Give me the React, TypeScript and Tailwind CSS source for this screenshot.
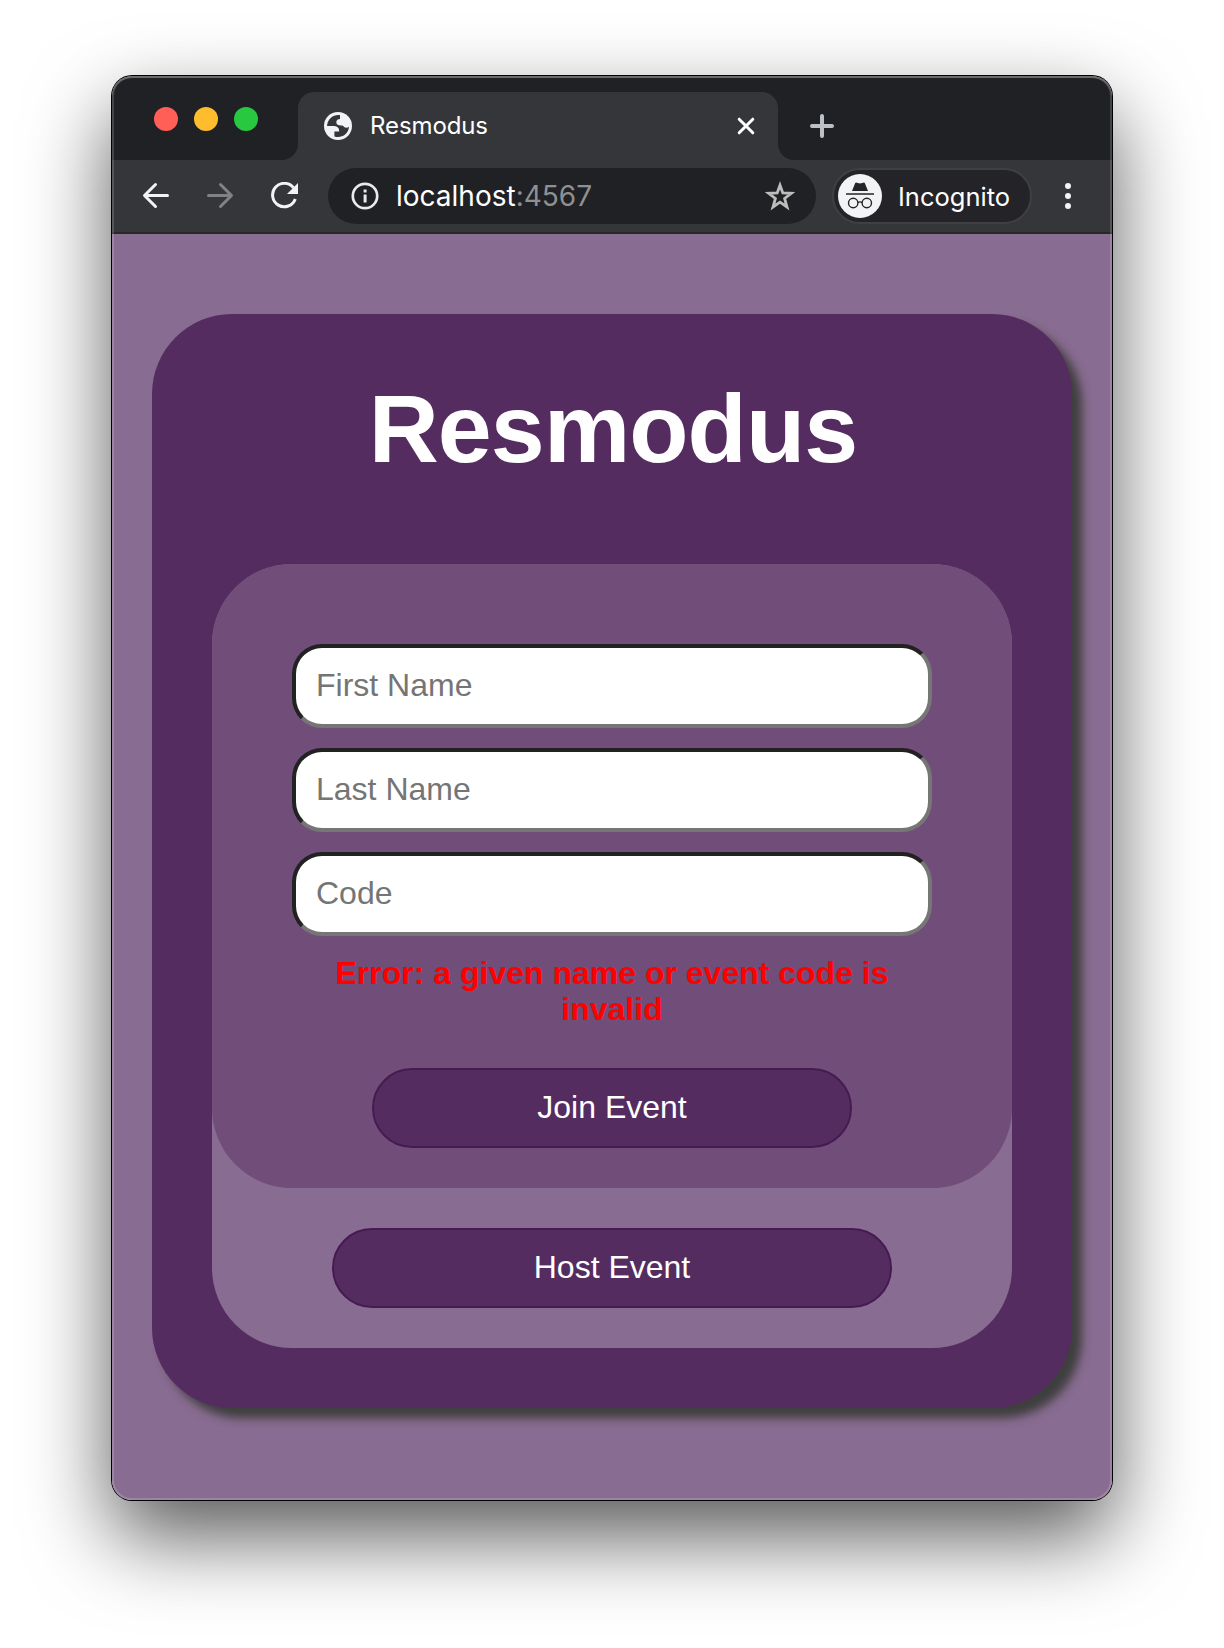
import React from "react";

const FIELDS = ["First Name", "Last Name", "Code"];

function TrafficLights() {
  return (
    <div className="flex gap-4 pl-[42px] pt-[31px] w-[186px] h-[84px]">
      <span className="size-6 rounded-full bg-[#ff5f57]" />
      <span className="size-6 rounded-full bg-[#ffbd2e]" />
      <span className="size-6 rounded-full bg-[#28c840]" />
    </div>
  );
}

function TabStrip() {
  return (
    <div className="flex h-[84px] bg-[#202124]">
      <TrafficLights />
      <div className="relative mt-4 flex h-[68px] w-[480px] items-center rounded-t-[16px] bg-[#35363a]">
        <svg className="absolute -left-4 bottom-0" width="16" height="16" viewBox="0 0 16 16">
          <path d="M16 0v16H0A16 16 0 0 0 16 0Z" fill="#35363a" />
        </svg>
        <svg className="absolute -right-4 bottom-0" width="16" height="16" viewBox="0 0 16 16">
          <path d="M0 0v16h16A16 16 0 0 1 0 0Z" fill="#35363a" />
        </svg>
        <svg className="ml-[26px] size-7 shrink-0" viewBox="0 0 28 28">
          <circle cx="14" cy="14" r="14" fill="#f1f3f4" />
          <path
            d="M16 3.200C9.600 2.200 4.400 6.600 3.200 12.400c-.1.600-.1 1-.1 1.600h6.500c3.400 0 5.500 1.600 5.500 4.300v1.200h-4.700v5c7 2.200 14-2.300 14.600-9.700-1.500 1.200-3.400 1.400-4.800.2-1-.9-1.600-1.400-3.200-1.400-2.600 0-4.700-1-4.700-3.300 0-2.100 1.500-3.300 3.700-3.300Z"
            fill="#35363a"
          />
        </svg>
        <span className="ml-[18px] grow text-[24px] leading-none tracking-[-0.1px] text-white">Resmodus</span>
        <svg className="mr-[23px] size-[18px]" viewBox="0 0 18 18" fill="none" stroke="#fff" strokeWidth="3" strokeLinecap="round">
          <path d="M2.200 2.200 15.800 15.800M15.800 2.200 2.200 15.800" />
        </svg>
      </div>
      <svg className="ml-8 mt-[38px] size-6" viewBox="0 0 24 24" fill="none" stroke="#bdc1c6" strokeWidth="4" strokeLinecap="round">
        <path d="M12 2v20M2 12h20" />
      </svg>
    </div>
  );
}

function Toolbar() {
  return (
    <div className="flex h-[74px] border-b-2 border-[#282828] bg-[#35363a]">
      <svg className="ml-[30px] mt-[22px] h-7 w-[28px] shrink-0" viewBox="0 0 28 28" fill="none" stroke="#f1f3f4" strokeWidth="3" strokeLinecap="round" strokeLinejoin="round">
        <path d="M25.500 13.500H3M13.500 2.500 2.500 13.500l11 11" />
      </svg>
      <svg className="ml-9 mt-[22px] h-7 w-[28px] shrink-0" viewBox="0 0 28 28" fill="none" stroke="#818285" strokeWidth="3" strokeLinecap="round" strokeLinejoin="round">
        <path d="M2.500 13.500H25M14.500 2.500l11 11-11 11" />
      </svg>
      <svg className="ml-9 mt-[22px] h-7 w-[28px] shrink-0" viewBox="0 0 28 28">
        <path d="M23.500 5.800A11.700 11.700 0 1 0 25.300 17" fill="none" stroke="#f1f3f4" strokeWidth="3" />
        <path d="M28 1v11H17Z" fill="#f1f3f4" />
      </svg>
      <div className="ml-[30px] mt-2 flex h-14 w-[488px] items-center rounded-full bg-[#202124]">
        <svg className="ml-[23px] size-7 shrink-0" viewBox="0 0 28 28">
          <circle cx="14" cy="14" r="12.200" fill="none" stroke="#e8eaed" strokeWidth="2.700" />
          <path d="M12.600 7.500h3v3h-3zM12.600 12.500h3v8h-3z" fill="#e8eaed" />
        </svg>
        <span className="ml-[17px] grow text-[28px] leading-none text-[#8f9093]">
          <span className="text-white">localhost</span>:4567
        </span>
        <svg className="mr-[21px] size-[30px]" viewBox="0 0 30 30" fill="none" stroke="#bdbdbd" strokeWidth="2.800">
          <path d="m15 4.200 2.800 7.800 8.600.3-6.800 5.200 2.400 8.500-7-4.900L8 26l2.400-8.500-6.800-5.200 8.600-.3Z" />
        </svg>
      </div>
      <div className="ml-4 mt-2 flex h-14 w-[200px] items-center rounded-full border-2 border-[#3f4044] bg-[#242328]">
        <svg className="ml-1 size-11 shrink-0" viewBox="0 0 44 44">
          <circle cx="22" cy="22" r="22" fill="#f1f3f4" />
          <path d="m14 17 3-7.500q.5-1.200 1.700-.8l3.300.8 3.300-.8q1.200-.4 1.700.8l3 7.500Z" fill="#242328" />
          <path d="M8 20h28" stroke="#242328" strokeWidth="1.600" />
          <g fill="none" stroke="#242328" strokeWidth="1.400">
            <circle cx="15.200" cy="29" r="4.700" />
            <circle cx="28.800" cy="29" r="4.700" />
            <path d="M19.900 28.400q2.100-1 4.200 0" />
          </g>
        </svg>
        <span className="ml-4 pt-0.5 text-[25.500px] leading-none text-white">Incognito</span>
      </div>
      <svg className="ml-[32px] mt-[22px] h-7 w-2" viewBox="0 0 8 28" fill="#f1f3f4">
        <circle cx="4" cy="4" r="3" />
        <circle cx="4" cy="14" r="3" />
        <circle cx="4" cy="24" r="3" />
      </svg>
    </div>
  );
}

function LandingPage() {
  return (
    <main className="flex grow flex-col items-center bg-[#896c91] pt-20 font-['Liberation_Sans',Arial,sans-serif]">
      <section className="flex h-[1094px] w-[920px] flex-col items-center rounded-[80px] bg-[#552c60] shadow-[10px_10px_10px_#3f3f3f]">
        <h1 className="mt-[60px] h-[190px] pl-0.5 text-[97px] font-bold leading-[110px] tracking-[-0.9px] text-white">Resmodus</h1>
        <div className="flex h-[784px] w-[800px] flex-col items-center rounded-[80px] bg-[#896c91]">
          <form className="flex h-[624px] w-[800px] flex-col items-center rounded-[80px] bg-[#714d79] pt-20">
            <div className="flex flex-col gap-5">
              {FIELDS.map((name) => (
                <input
                  key={name}
                  placeholder={name}
                  className="h-[84px] w-[640px] rounded-[30px] border-4 border-b-[#767676] border-l-[#222] border-r-[#767676] border-t-[#222] bg-white px-5 pb-0.5 text-[32px] text-black placeholder:text-[#757575]"
                />
              ))}
            </div>
            <p className="mt-[19px] h-[73px] w-[640px] text-center text-[32px] font-bold leading-9 text-[#ff0000]">
              Error: a given name or event code is invalid
            </p>
            <button type="button" className="mt-10 h-20 w-[480px] rounded-[40px] border-2 border-[#451b50] bg-[#552c60] pb-0.5 text-[32px] text-white">
              Join Event
            </button>
          </form>
          <button type="button" className="mt-10 h-20 w-[560px] rounded-[40px] border-2 border-[#451b50] bg-[#552c60] pb-0.5 text-[32px] text-white">
            Host Event
          </button>
        </div>
      </section>
    </main>
  );
}

export default function App() {
  return (
    <div className="flex h-[1648px] w-[1224px] justify-center overflow-hidden bg-white pt-[76px]">
      <div className="h-[1424px] w-[1000px] rounded-[20px] shadow-[0_0_0_1px_#000,0_36px_84px_rgba(0,0,0,0.66)]">
        <div className="relative flex h-full flex-col overflow-hidden rounded-[20px] font-[Inter,sans-serif]">
          <TabStrip />
          <Toolbar />
          <LandingPage />
          <div className="pointer-events-none absolute inset-0 rounded-[20px] shadow-[inset_0_0_0_2px_rgba(255,255,255,0.17),inset_0_2px_0_rgba(255,255,255,0.2)]" />
        </div>
      </div>
    </div>
  );
}
